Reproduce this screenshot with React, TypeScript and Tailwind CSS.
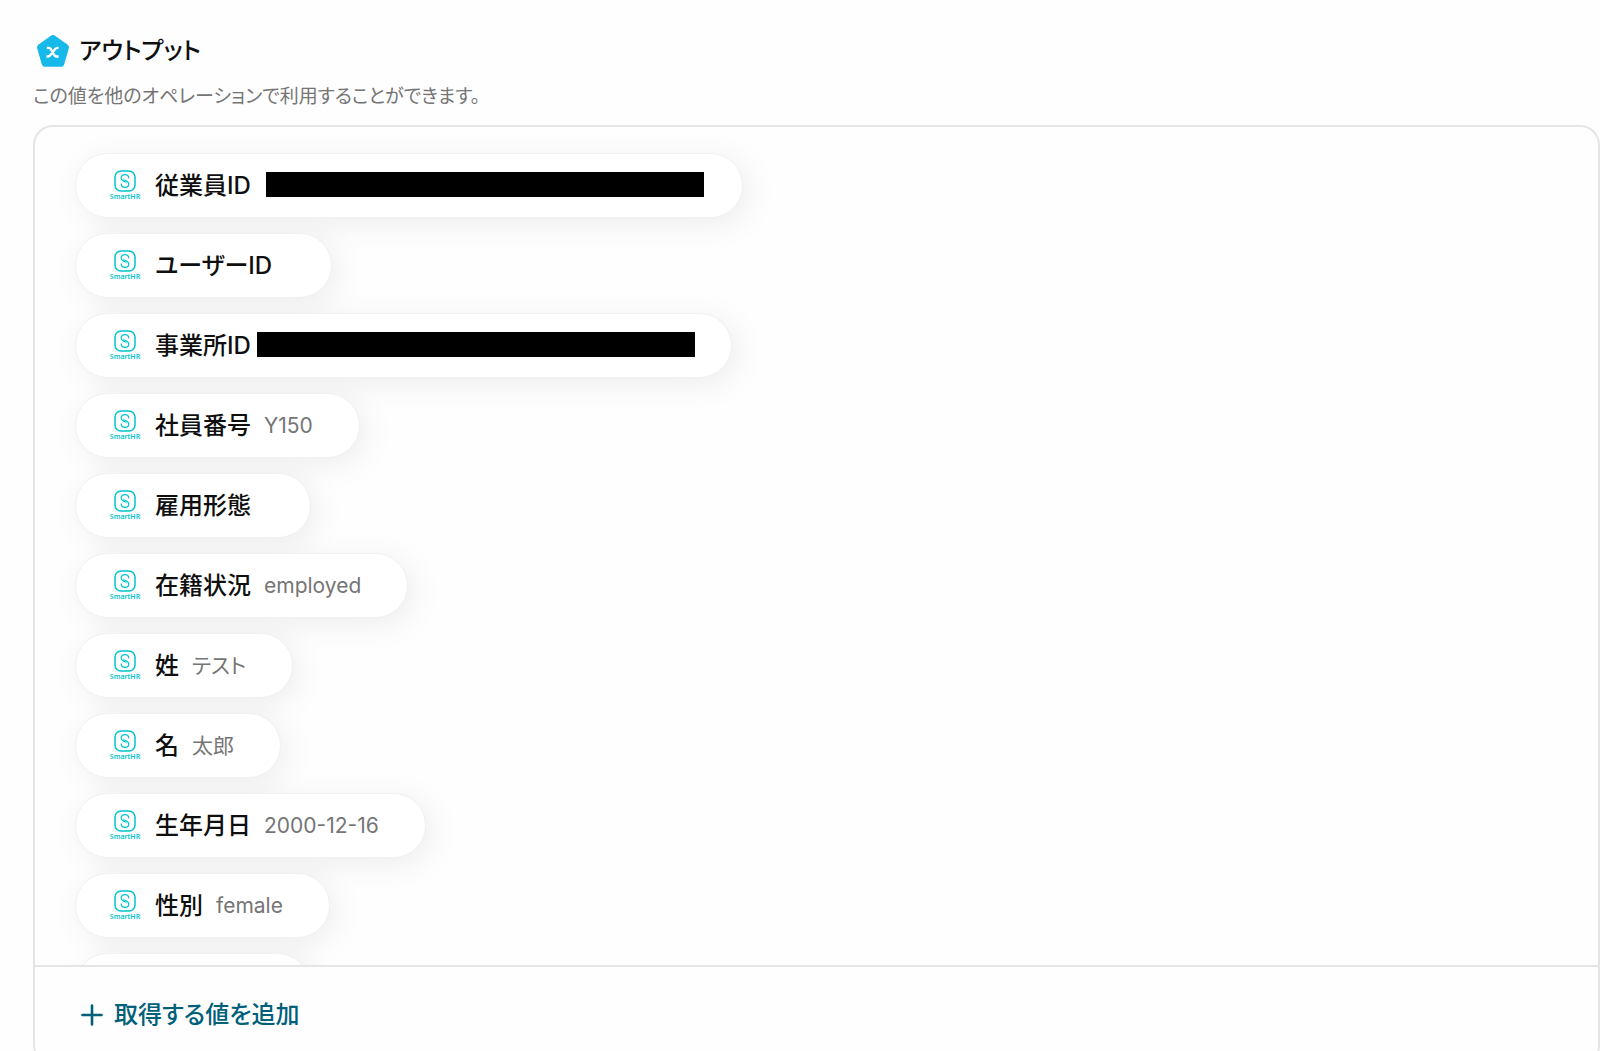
type OutputField = { label: string; value?: string; mask?: string };

const fields: OutputField[] = [
  { label: "従業員ID", mask: "ml-[2px] -mr-[8px]" },
  { label: "ユーザーID" },
  { label: "事業所ID", mask: "-ml-[7px] -mr-[10px]" },
  { label: "社員番号", value: "Y150" },
  { label: "雇用形態" },
  { label: "在籍状況", value: "employed" },
  { label: "姓", value: "テスト" },
  { label: "名", value: "太郎" },
  { label: "生年月日", value: "2000-12-16" },
  { label: "性別", value: "female" },
];

const pill =
  "flex h-[65px] shrink-0 items-center rounded-full border border-[#f1f1f1] bg-white pr-[46px] pl-[34px] shadow-[6px_6px_32px_rgba(0,0,0,0.07)]";

function PentagonIcon() {
  return (
    <svg width="32" height="32" viewBox="0 0 32 32" className="shrink-0" aria-hidden="true">
      <path
        d="M13.6 0.9Q16 -0.7 18.4 0.9L30.4 9.4Q32.5 11 31.8 13.6L27.3 28.9Q26.5 31.8 23.6 31.8H8.4Q5.5 31.8 4.7 28.9L0.2 13.6Q-0.5 11 1.6 9.4Z"
        fill="#17b8ea"
      />
      <path
        d="M9.8 12.9H11.6Q13.2 12.9 14 14.3L17.2 20.1Q18 21.5 19.6 21.5H21.6M21.6 12.9H20.6Q19.2 12.9 18 14.3L13.4 20.1Q12.2 21.5 10.8 21.5H9.4"
        fill="none"
        stroke="#fff"
        strokeWidth="2.4"
      />
    </svg>
  );
}

function SmartHrLogo() {
  return (
    <div className="flex w-[30px] shrink-0 flex-col items-center text-[#00c4cc]">
      <svg width="22" height="22" viewBox="0 0 22 22" fill="none" stroke="currentColor" aria-hidden="true">
        <rect x="1" y="1" width="20" height="20" rx="6" strokeWidth="1.5" />
        <path
          d="M14.8 8.6C14.8 6.1 13.2 4.7 11 4.7S7.2 6.1 7.2 8C7.2 9.6 8.1 10.4 9.3 10.9L11.4 11.9M7.2 13.4C7.2 15.9 8.8 17.3 11 17.3S14.8 15.9 14.8 14C14.8 12.4 13.9 11.6 12.7 11.1L10.6 10.1"
          strokeWidth="1.2"
        />
        <path d="M10.6 10.1Q9.7 9.6 9.8 8.4M11.4 11.9Q12.3 12.4 12.2 13.6" strokeWidth="0.8" />
      </svg>
      <span className="font-['Noto_Sans'] text-[7px] leading-[10px] font-semibold">SmartHR</span>
    </div>
  );
}

function FieldPill({ label, value, mask }: OutputField) {
  return (
    <li className={pill}>
      <SmartHrLogo />
      <span className="ml-[15px] text-[24px] leading-9 font-medium whitespace-nowrap text-[#0f0f0f]">{label}</span>
      <span className="ml-[13px] text-[21px] leading-8 whitespace-nowrap text-[#757575]">
        {mask ? <span className={`mb-[3px] block h-[25px] w-[438px] bg-black ${mask}`} /> : value}
      </span>
    </li>
  );
}

export default function App() {
  return (
    <main className="h-screen overflow-hidden bg-[#fefefe] pt-[35px] pl-[33px] font-['Inter','Noto_Sans_CJK_JP',sans-serif] [font-feature-settings:'palt']">
      <header>
        <div className="flex h-8 items-center gap-[10px] pl-1">
          <PentagonIcon />
          <h1 className="text-[24px] leading-8 font-medium text-[#0f0f0f]">アウトプット</h1>
        </div>
        <p className="mt-4 text-[19px] leading-7 text-[#757575]">
          この値を他のオペレーションで利用することができます。
        </p>
      </header>
      <section className="mt-[14px] overflow-hidden rounded-[20px] border-2 border-[#e5e5e5]">
        <ul className="flex max-h-[838px] flex-col items-start gap-[15px] overflow-hidden pt-[26px] pl-[40px]">
          {fields.map((f) => (
            <FieldPill key={f.label} {...f} />
          ))}
          <li aria-hidden="true" className={`w-[235px] ${pill}`} />
        </ul>
        <div className="border-t-2 border-[#e5e5e5] px-[46px] py-[30px]">
          <button type="button" className="flex items-center gap-[11px] text-[#00607a]">
            <svg width="22" height="22" viewBox="0 0 22 22" fill="none" stroke="currentColor" strokeWidth="2.6" strokeLinecap="round" aria-hidden="true">
              <path d="M11 1.5v19M1.5 11h19" />
            </svg>
            <span className="text-[24px] leading-9 font-medium">取得する値を追加</span>
          </button>
        </div>
      </section>
    </main>
  );
}
